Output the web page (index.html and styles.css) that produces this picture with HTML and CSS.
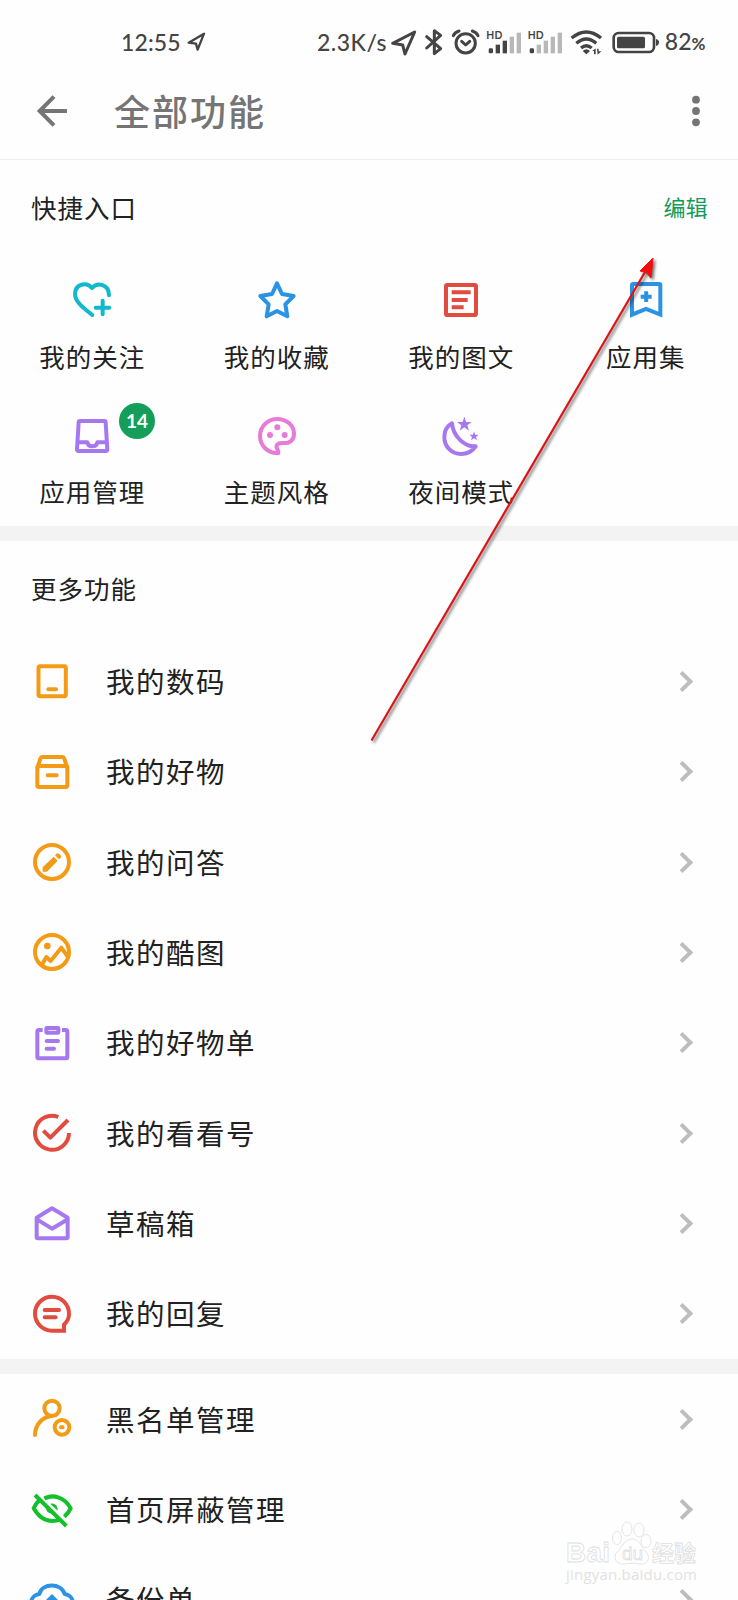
FILE: index.html
```html
<!DOCTYPE html>
<html lang="zh-CN">
<head>
<meta charset="utf-8">
<title>全部功能</title>
<link rel="stylesheet" href="styles.css">
</head>
<body>
<div class="screen">
  <div class="status">
    <span class="clock">12:55</span>
    <svg class="nav-small" viewBox="0 0 60 60"><path d="M5 32 L51 5 L32 53 L27 35Z"/></svg>
    <span class="speed">2.3K/s</span>
    <svg class="sys" viewBox="270 0 806 150">
      <path class="s" d="M278 70 L344 36 L315 102 L308 75Z"/>
      <path class="s" d="M380 50 L422 86 L403 101 V32 L422 46 L380 84"/>
      <circle class="s" cx="497" cy="70" r="29"/>
      <path class="s" d="M485 64 L497 75 L509 64 M460 47 Q465 37 477 33 M534 47 Q529 37 517 33"/>
      <text class="hd" x="559" y="58" textLength="48">HD</text>
      <rect x="566" y="85" width="13" height="15" rx="4"/><rect x="587" y="74" width="13" height="26"/><rect x="608" y="62" width="13" height="38"/><rect class="off" x="629" y="50" width="13" height="50"/><rect class="off" x="650" y="38" width="13" height="62"/>
      <text class="hd" x="683" y="58" textLength="48">HD</text>
      <rect x="689" y="85" width="13" height="15" rx="4"/><rect class="off" x="710" y="74" width="13" height="26"/><rect class="off" x="731" y="62" width="13" height="38"/><rect class="off" x="752" y="50" width="13" height="50"/><rect class="off" x="773" y="38" width="13" height="62"/>
      <path class="w" d="M815 54 Q859 18 903 54 M829 70 Q859 44 889 70 M843 84 Q859 70 875 84"/>
      <path d="M848 93 Q859 83 870 93 L859 103Z M877 93 L887 85 V103 H882 V93Z M891 86 H896 V94 H904 L893 104Z"/>
      <rect class="b" x="941" y="39" width="121" height="57" rx="15"/>
      <rect x="951" y="50" width="84" height="35" rx="5"/><path d="M1068 57 Q1077 59 1077 67 Q1077 76 1068 78Z"/>
    </svg>
    <span class="pct">82<small>%</small></span>
  </div>
  <header class="bar">
    <svg class="back" viewBox="0 0 96 96"><path d="M90 48 H8 M51 5 L8 48 L51 91"/></svg>
    <h1>全部功能</h1>
    <svg class="more" viewBox="0 0 12 36"><circle cx="6" cy="6.700" r="3.900"/><circle cx="6" cy="18" r="3.900"/><circle cx="6" cy="29.300" r="3.900"/></svg>
  </header>
  <section class="quick">
    <div class="head"><h2>快捷入口</h2><a class="edit">编辑</a></div>
    <div class="grid">
      <div class="tile"><svg class="ic cyan" viewBox="-72 -72 144 144"><path d="M1 45 C-25 25 -51 5 -51 -17 C-51 -49 -16 -55 0 -36 C16 -55 51 -48 51 -14 M11 23 H52 M32 2 V43"/></svg><span>我的关注</span></div>
      <div class="tile"><svg class="ic blue" viewBox="-72 -72 144 144"><path d="M0 -50 L15 -18 L50 -12 L25 13 L31 49 L0 33 L-31 49 L-25 13 L-50 -12 L-15 -18Z"/></svg><span>我的收藏</span></div>
      <div class="tile"><svg class="ic red" viewBox="-72 -72 144 144"><rect x="-45" y="-45" width="90" height="90" rx="4"/><path class="butt" d="M-28 -23 H29 M-28 0 H20 M-28 22 H8"/></svg><span>我的图文</span></div>
      <div class="tile"><svg class="ic blue" viewBox="-72 -72 144 144"><path class="miter" d="M-42 44 V-44 Q-42 -48 -38 -48 H39 Q43 -48 43 -44 V44 L0 27Z M-16 -10 H17 M0.500 -26 V6"/></svg><span>应用集</span></div>
      <div class="tile"><svg class="ic purple" viewBox="-72 -72 144 144"><path d="M-35 -45 H37 Q41 -45 41 -41 L46 40 Q46 45 41 45 H-40 Q-45 45 -45 40 L-40 -41 Q-40 -45 -35 -45Z M-43 19 H-14 Q-12 31 1 31 Q14 31 16 19 H44"/></svg><b class="badge">14</b><span>应用管理</span></div>
      <div class="tile"><svg class="ic pink" viewBox="-72 -72 144 144"><path d="M4 51 C-28 53 -51 28 -51 0 C-51 -28 -28 -51 0 -51 C30 -51 51 -31 51 -7 C51 15 35 23 19 21 C0 20 -6 29 2 41 Q5 46 4 51Z"/><g class="fill"><circle cx="-21" cy="-3" r="9"/><circle cx="1" cy="-26" r="9"/><circle cx="23" cy="-3" r="9"/></g></svg><span>主题风格</span></div>
      <div class="tile"><svg class="ic purple" viewBox="-72 -72 144 144"><path d="M-27 -38 C-24 0 10 33 44 31 C34 46 18 54 0 54 C-28 54 -50 32 -50 4 C-50 -14 -42 -30 -27 -38Z"/><path class="fill" d="M10 -58 L15.500 -42 L32 -42 L19 -32 L24 -16 L10 -26 L-4 -16 L1 -32 L-12 -42 L4.500 -42Z M39 -14 L42.500 -4 L53 -4 L45 3 L48 13 L39 7 L30 13 L33 3 L25 -4 L35.500 -4Z"/></svg><span>夜间模式</span></div>
    </div>
  </section>
  <section class="list">
    <h2 class="sub">更多功能</h2>
    <div class="row"><svg class="ic orange" viewBox="-72 -72 144 144"><rect x="-40.500" y="-44.500" width="82" height="90" rx="5"/><path d="M-11 25 H12"/></svg><span>我的数码</span><i class="chev"></i></div>
    <div class="row"><svg class="ic orange" viewBox="-72 -72 144 144"><rect x="-44" y="-18" width="90" height="63" rx="5"/><path d="M-43 -14 L-35 -40 Q-33 -45 -29 -45 H30 Q35 -45 37 -40 L45 -14 M-13 10 H14"/></svg><span>我的好物</span><i class="chev"></i></div>
    <div class="row"><svg class="ic orange" viewBox="-72 -72 144 144"><circle r="51"/><path class="fill" d="M-28 29 V16 L5 -16 L17 -4 L-15 29Z M9 -20 L14 -25 Q18 -28 21 -25 L26 -20 Q29 -17 26 -13 L21 -8Z"/></svg><span>我的问答</span><i class="chev"></i></div>
    <div class="row"><svg class="ic orange" viewBox="-72 -72 144 144"><circle r="51"/><circle class="fill" cx="-14" cy="-18" r="10"/><path d="M-30 38 L-17 15 L-4 27 L28 -13 L47 14"/></svg><span>我的酷图</span><i class="chev"></i></div>
    <div class="row"><svg class="ic purple" viewBox="-72 -72 144 144"><path class="butt" d="M-28 -39 H-39 Q-44 -39 -44 -34 V41 Q-44 46 -39 46 H41 Q46 46 46 41 V-34 Q46 -39 41 -39 H30"/><rect x="-17" y="-45" width="36" height="14" rx="1"/><path d="M-16 -6 H18 M-16 17 H6"/></svg><span>我的好物单</span><i class="chev"></i></div>
    <div class="row"><svg class="ic red" viewBox="-72 -72 144 144"><path class="butt" d="M51 0 A51 51 0 1 1 19 -48 M-26 -7 L-5 14 L48 -39"/></svg><span>我的看看号</span><i class="chev"></i></div>
    <div class="row"><svg class="ic purple" viewBox="-72 -72 144 144"><path d="M-46 -16 L0 -44 L47 -16 V42 Q47 46 43 46 H-42 Q-46 46 -46 42Z M-44 -10 L0 17 L45 -10"/></svg><span>草稿箱</span><i class="chev"></i></div>
    <div class="row"><svg class="ic red" viewBox="-72 -72 144 144"><path class="miter" d="M36 50 H0 A51 51 0 1 1 51 0 Q51 18 36 32Z"/><path d="M-22 -12 H21 M-22 10 H11"/></svg><span>我的回复</span><i class="chev"></i></div>
  </section>
  <section class="list">
    <div class="row"><svg class="ic orange" viewBox="-72 -72 144 144"><circle cx="0" cy="-32" r="23"/><path d="M-51 48 C-50 14 -27 -7 0 -9 M27 25 H32"/><circle cx="30" cy="25" r="22"/></svg><span>黑名单管理</span><i class="chev"></i></div>
    <div class="row"><svg class="ic green" viewBox="-72 -72 144 144"><path class="butt" d="M-51 -42 L43 51 M-39 -26 Q-50 -14 -55 -2 Q-33 36 0 36 Q13 36 24 32 M-23 -32 Q0 -42 18 -35 Q43 -27 56 -2 Q50 11 37 23"/><path class="fill" d="M-5 -16 Q16 -20 17 5Z M-17 -5 Q-19 12 0 14Z"/></svg><span>首页屏蔽管理</span><i class="chev"></i></div>
    <div class="row"><svg class="ic blue" viewBox="-72 -72 144 144"><path d="M-40 43 C-72 40 -72 -14 -38 -18 C-30 -52 28 -52 38 -18 C72 -14 72 40 40 43Z"/><path class="fill" d="M0 -18 L23 5 H8 V30 H-8 V5 H-23Z"/></svg><span>备份单</span><i class="chev"></i></div>
  </section>
  <svg class="pointer" viewBox="0 0 738 1600"><path d="M371.500 740.500 L645 272" /><path class="tip" d="M653 258 L651 278 L646 272 L640 271Z"/></svg>
  <div class="mark">
    <svg viewBox="0 0 144 60"><text class="logo" x="2" y="42" textLength="44">Bai</text><g class="paw"><ellipse cx="53" cy="18" rx="4.500" ry="6.500"/><ellipse cx="63" cy="9" rx="5" ry="7"/><ellipse cx="75" cy="10" rx="5" ry="7"/><ellipse cx="82" cy="21" rx="5" ry="6.500"/><path d="M68 19 C60 19 58 28 53 32 C48 38 53 45 60 44 Q68 42 76 44 C84 45 87 37 82 32 C77 27 76 19 68 19Z"/></g><text class="du" x="58" y="40">du</text><text class="cn" x="88" y="41">经验</text><text class="url" x="2" y="60" textLength="131">jingyan.baidu.com</text></svg>
  </div>
</div>
</body>
</html>
```
FILE: styles.css
```css
body { margin: 0; background: #fff; }
.screen {
  position: relative; width: 738px; height: 1600px; overflow: hidden; background: #fefefe;
  color: #212121; font-family: "Noto Sans CJK SC", sans-serif;
}
h1, h2 { margin: 0; font-weight: 400; }
svg { display: block; overflow: visible; flex: none; }

.status { display: flex; align-items: center; height: 66px; padding: 18px 0 0 121px; box-sizing: border-box; font: 500 23px/46px Lato, sans-serif; color: #444; letter-spacing: .1px; white-space: nowrap; }
.clock { width: 66px; }
.nav-small { width: 20px; height: 20px; fill: none; stroke: #444; stroke-width: 7; stroke-linejoin: round; }
.speed { width: 73px; margin-left: 110px; letter-spacing: .5px; }
.sys { width: 268.700px; height: 50px; margin-top: 2px; align-self: flex-start; fill: #444; }
.s { fill: none; stroke: #444; stroke-width: 9; stroke-linecap: round; stroke-linejoin: round; }
.w { fill: none; stroke: #444; stroke-width: 10; }
.b { fill: none; stroke: #444; stroke-width: 8; }
.off { fill: #b8b8b8; }
.hd { font: 700 31px Lato, sans-serif; letter-spacing: 0; }
.pct { margin-left: 6px; }
.pct small { font-size: 17px; font-weight: 700; }

.bar { display: flex; align-items: center; height: 93px; padding: 0 36px 0 37px; border-bottom: 1px solid #eee; color: #757575; }
.back { width: 32px; height: 32px; margin-top: -3px; fill: none; stroke: #757575; stroke-width: 12; }
.bar h1 { flex: 1; margin: -6px 0 0 45px; font-size: 36px; line-height: 60px; font-weight: 500; letter-spacing: 2px; }
.more { width: 12px; height: 36px; margin-top: -3px; fill: #757575; }

.quick { height: 366px; border-bottom: 15px solid #f3f3f3; }
.head { display: flex; justify-content: space-between; align-items: center; height: 93px; padding: 0 30px 0 31px; }
h2 { font-size: 25.500px; line-height: 38px; letter-spacing: 1px; }
.edit { color: #159a59; font-size: 22px; line-height: 32px; letter-spacing: .3px; margin-top: -2px; }
.grid { display: grid; grid-template-columns: repeat(4, 1fr); grid-auto-rows: 135.500px; padding-top: 24px; }
.tile { position: relative; display: flex; flex-direction: column; align-items: center; font-size: 25.500px; line-height: 38px; letter-spacing: 1px; }
.tile .ic { margin-top: -1px; }
.tile span { margin-top: 12.500px; }
.badge { position: absolute; left: 119px; top: -10px; width: 36px; height: 36px; border-radius: 50%; background: #149e59; color: #fff; font: 700 19px/36px Lato, sans-serif; letter-spacing: 0; text-align: center; }

.ic { width: 48px; height: 48px; fill: none; stroke: currentColor; stroke-width: 12; stroke-linecap: round; stroke-linejoin: round; }
.fill { fill: currentColor; stroke: none; }
.butt { stroke-linecap: butt; }
.miter { stroke-linecap: butt; stroke-linejoin: miter; }
.cyan { color: #12b8cb; }
.blue { color: #2a93e6; }
.red { color: #e24b40; }
.purple { color: #a678f0; }
.pink { color: #e77bd8; }
.orange { color: #f49b16; }
.green { color: #12c02c; }

.list + .list { border-top: 15px solid #f3f3f3; }
.sub { height: 95.300px; padding-left: 31px; line-height: 94px; box-sizing: border-box; }
.row { display: flex; align-items: center; height: 90.330px; padding: 0 46px 0 28px; }
.row span { flex: 1; margin: -1px 0 0 30px; font-size: 28.500px; line-height: 42px; letter-spacing: 1.500px; }
.chev { width: 11px; height: 11px; margin-right: 2.500px; border: solid #bdbdbd; border-width: 3.500px 3.500px 0 0; border-width: 4px 4px 0 0; transform: rotate(45deg); }

.pointer { position: absolute; left: 0; top: 0; width: 738px; height: 1600px; fill: none; stroke: #dc1418; stroke-width: 2.200; filter: drop-shadow(2px 2px 1.500px rgba(0,0,0,.55)); }
.tip { fill: #f40b0b; stroke: #f40b0b; stroke-width: 1; }

.mark { position: absolute; left: 564px; top: 1520px; width: 144px; height: 60px; }
.mark svg { width: 144px; height: 60px; fill: #fefefe; stroke: #dedede; stroke-width: .8; }
.logo { font: 700 28px "Liberation Sans", sans-serif; }
.du { font: 400 19px "Liberation Sans", sans-serif; }
.cn { font: 700 22px "Noto Sans CJK SC", sans-serif; }
.mark .url { font: 400 15px "Open Sans", sans-serif; fill: #e2e2e2; stroke: none; }
```
